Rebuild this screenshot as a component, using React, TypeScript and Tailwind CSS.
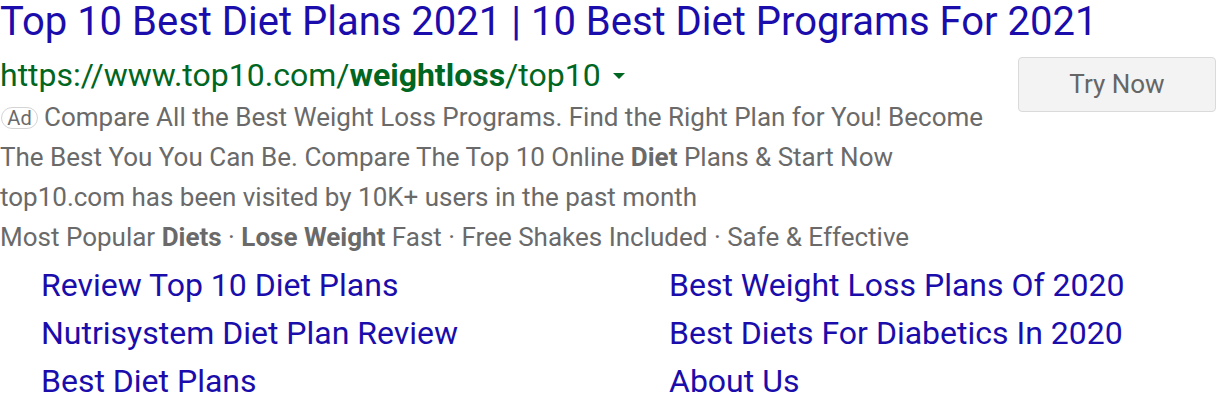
import React from "react";

export default function App() {
  const font = { fontFamily: "Roboto, 'Noto Sans', Arial, sans-serif" };
  return (
    <div className="w-[1216px] h-[410px] bg-white" style={font}>
      <div className="text-[40px] leading-[48px] -mt-[2px] text-[#1a0dab] whitespace-nowrap">
        Top 10 Best Diet Plans 2021 | 10 Best Diet Programs For 2021
      </div>
      <div className="flex">
        <div className="flex-1">
          <div className="mt-[9px] flex items-center text-[32px] leading-[40px] text-[#006621] whitespace-nowrap">
            <span>
              https://www.top10.com/<b className="font-bold">weightloss</b>/top10
            </span>
            <span className="ml-[12px] mt-[2px] inline-block w-0 h-0 border-l-[6px] border-r-[6px] border-t-[6px] border-l-transparent border-r-transparent border-t-[#006621]" />
          </div>
          <div className="mt-[2px] text-[26px] leading-[40px] text-[#6a6a6a]">
            <div className="flex items-center whitespace-nowrap">
              <span className="inline-flex items-center justify-center h-[22px] w-[37px] ml-[1px] mr-[6px] mt-[2px] rounded-[11px] border border-[#d4d4d4] text-[20px] leading-none text-[#6a6a6a]">
                Ad
              </span>
              <span>Compare All the Best Weight Loss Programs. Find the Right Plan for You! Become</span>
            </div>
            <div className="whitespace-nowrap">
              The Best You You Can Be. Compare The Top 10 Online <b className="font-bold">Diet</b> Plans &amp; Start Now
            </div>
            <div className="whitespace-nowrap">top10.com has been visited by 10K+ users in the past month</div>
            <div className="whitespace-nowrap">
              Most Popular <b className="font-bold">Diets</b> · <b className="font-bold">Lose Weight</b> Fast · Free Shakes Included · Safe &amp; Effective
            </div>
          </div>
        </div>
        <div className="pt-[11px]">
          <div className="w-[198px] h-[55px] rounded-[4px] border border-[#dadada] bg-[#f3f3f3] flex items-center justify-center text-[26px] text-[#666666]">
            Try Now
          </div>
        </div>
      </div>
      <div className="grid grid-cols-[628px_1fr] pl-[41px] text-[32px] leading-[48px] text-[#1a0dab] whitespace-nowrap mt-[4px]">
        <div>Review Top 10 Diet Plans</div>
        <div>Best Weight Loss Plans Of 2020</div>
        <div>Nutrisystem Diet Plan Review</div>
        <div>Best Diets For Diabetics In 2020</div>
        <div>Best Diet Plans</div>
        <div>About Us</div>
      </div>
    </div>
  );
}
